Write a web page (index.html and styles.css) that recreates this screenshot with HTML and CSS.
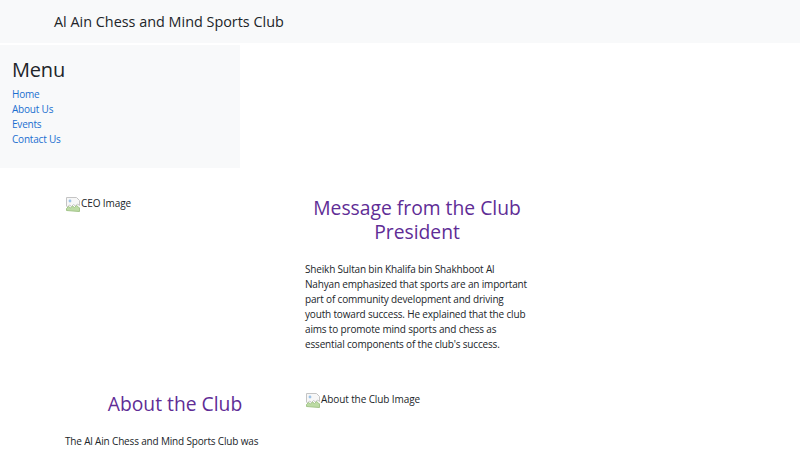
FILE: index.html
```html
<!DOCTYPE html>
<html lang="en">
<head>
<meta charset="utf-8">
<title>Al Ain Chess and Mind Sports Club</title>
<link rel="stylesheet" href="styles.css">
</head>
<body>
<header class="navbar">
  <span class="brand">Al Ain Chess and Mind Sports Club</span>
</header>
<aside class="sidebar">
  <h2 class="menu-title">Menu</h2>
  <ul class="menu">
    <li><a href="#">Home</a></li>
    <li><a href="#">About Us</a></li>
    <li><a href="#">Events</a></li>
    <li><a href="#">Contact Us</a></li>
  </ul>
</aside>
<main class="content">
  <section class="row">
    <div class="col">
      <div class="broken"><svg class="broken-icon" viewBox="0 0 16 16"><path d="M1.5 1.5h10l3 3v5l-2-1.5-2 2-2-1.5-2 2-2-1.5-2 2-1-1z" fill="#f7f7f7" stroke="#c4c4c4" stroke-width="1"/><path d="M1.5 14.5v-2l2-2 2 1.5 2-2 2 1.5 2-2 2 1.5 1 1v3.5z" fill="#bcdba4" stroke="#a3c48a" stroke-width="1"/><circle cx="5" cy="5" r="1.4" fill="#9cc3e8"/></svg><span>CEO Image</span></div>
    </div>
    <div class="col">
      <h2 class="section-title">Message from the Club President</h2>
      <p class="text">Sheikh Sultan bin Khalifa bin Shakhboot Al Nahyan emphasized that sports are an important part of community development and driving youth toward success. He explained that the club aims to promote mind sports and chess as essential components of the club's success.</p>
    </div>
  </section>
  <section class="row">
    <div class="col">
      <h2 class="section-title">About the Club</h2>
      <p class="text">The Al Ain Chess and Mind Sports Club was established to spread the culture of chess and mind sports among all age groups in the community.</p>
    </div>
    <div class="col">
      <div class="broken"><svg class="broken-icon" viewBox="0 0 16 16"><path d="M1.5 1.5h10l3 3v5l-2-1.5-2 2-2-1.5-2 2-2-1.5-2 2-1-1z" fill="#f7f7f7" stroke="#c4c4c4" stroke-width="1"/><path d="M1.5 14.5v-2l2-2 2 1.5 2-2 2 1.5 2-2 2 1.5 1 1v3.5z" fill="#bcdba4" stroke="#a3c48a" stroke-width="1"/><circle cx="5" cy="5" r="1.4" fill="#9cc3e8"/></svg><span>About the Club Image</span></div>
    </div>
  </section>
</main>
</body>
</html>
```
FILE: styles.css
```css
* { box-sizing: border-box; }
body {
  margin: 0;
  font-family: "Open Sans", "Noto Sans", sans-serif;
  color: #212529;
  background: #fff;
}
.navbar {
  height: 43px;
  background: #f8f9fa;
  display: flex;
  align-items: center;
  padding-left: 54px;
}
.brand {
  font-size: 14.4px;
  color: #212529;
}
.sidebar {
  margin-top: 2px;
  width: 240px;
  height: 123px;
  background: #f8f9fa;
  padding: 12px 12px;
}
.menu-title {
  margin: 0 0 4px;
  font-size: 20px;
  font-weight: 400;
  line-height: 26px;
  letter-spacing: -0.2px;
}
.menu {
  list-style: none;
  margin: 0;
  padding: 0;
  font-size: 10px;
  line-height: 15px;
  letter-spacing: -0.2px;
}
.menu a {
  color: #1a6fd0;
  text-decoration: none;
}
.content {
  padding: 28px 0 0 65px;
}
.row {
  display: grid;
  grid-template-columns: 220px 224px;
  column-gap: 20px;
  margin-bottom: 40px;
}
.section-title {
  margin: 0 0 18px;
  font-size: 19.3px;
  font-weight: 400;
  line-height: 24px;
  color: #5f2d96;
  text-align: center;
}
.text {
  margin: 0;
  font-size: 10px;
  line-height: 15px;
  letter-spacing: -0.17px;
}
.broken {
  display: flex;
  align-items: flex-start;
  font-size: 10px;
  line-height: 15px;
  letter-spacing: -0.1px;
}
.broken-icon {
  width: 16px;
  height: 16px;
  flex: none;
}
```
